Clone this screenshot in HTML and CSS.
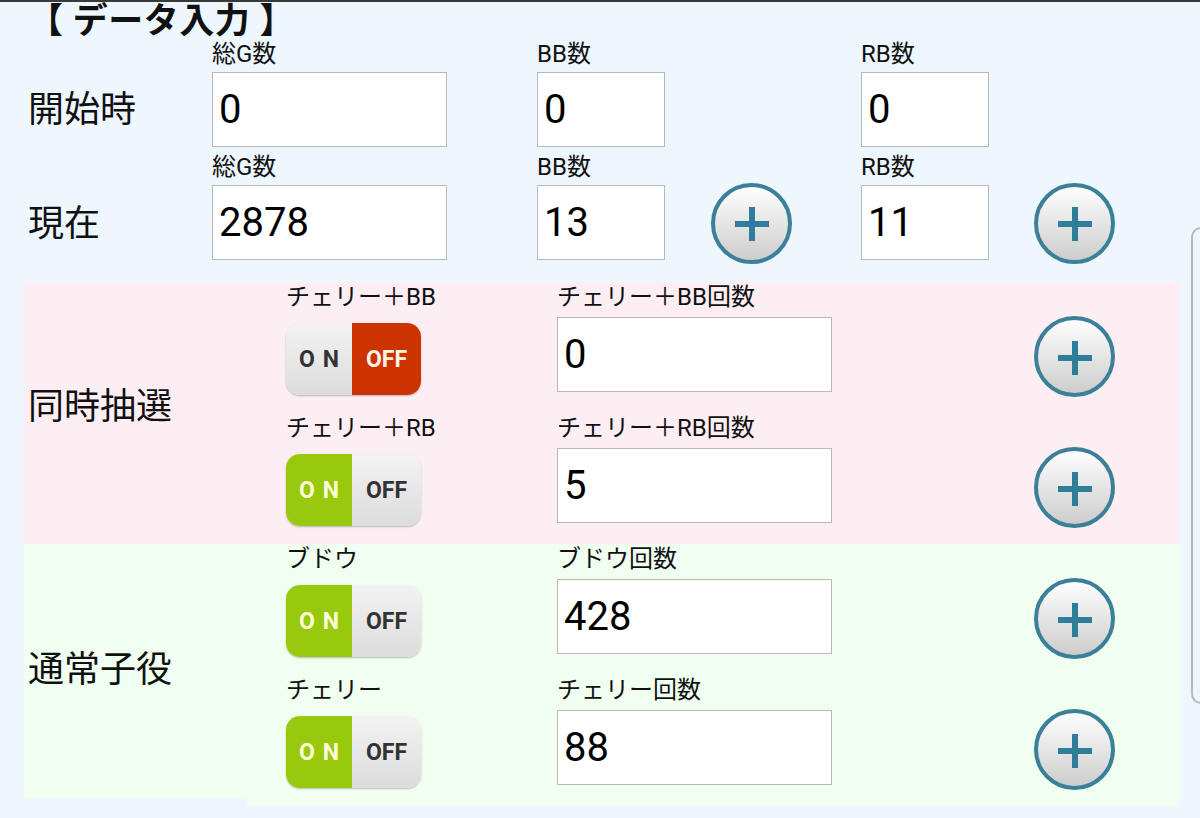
FILE: index.html
```html
<!DOCTYPE html>
<html lang="ja">
<head>
  <meta charset="UTF-8">
  <meta name="viewport" content="width=device-width, initial-scale=1.0">
  <title>データ入力</title>
  <link rel="stylesheet" href="styles.css">
</head>
<body>

<div class="topline"></div>

<div class="page">
  <h1 class="title">【 データ入力 】</h1>

  <div class="counts">
    <div></div>
    <div class="cap">総G数</div>
    <div class="cap">BB数</div>
    <div></div>
    <div class="cap">RB数</div>
    <div></div>

    <div class="row-label">開始時</div>
    <input class="num wide" type="text" value="0">
    <input class="num short" type="text" value="0">
    <div></div>
    <input class="num short" type="text" value="0">
    <div></div>

    <div></div>
    <div class="cap">総G数</div>
    <div class="cap">BB数</div>
    <div></div>
    <div class="cap">RB数</div>
    <div></div>

    <div class="row-label">現在</div>
    <input class="num wide" type="text" value="2878">
    <input class="num short" type="text" value="13">
    <button class="plus centered"><svg viewBox="0 0 34 34"><rect x="0" y="14" width="34" height="6"/><rect x="14" y="0" width="6" height="34"/></svg></button>
    <input class="num short" type="text" value="11">
    <button class="plus centered"><svg viewBox="0 0 34 34"><rect x="0" y="14" width="34" height="6"/><rect x="14" y="0" width="6" height="34"/></svg></button>
  </div>

  <div class="group pink">
    <div class="group-label">同時抽選</div>
    <div class="group-rows">
      <div class="item">
        <div class="cap">チェリー＋BB</div>
        <div class="cap">チェリー＋BB回数</div>
        <div></div>
        <div class="toggle is-off"><span class="on">O N</span><span class="off">OFF</span></div>
        <input class="num field" type="text" value="0">
        <button class="plus"><svg viewBox="0 0 34 34"><rect x="0" y="14" width="34" height="6"/><rect x="14" y="0" width="6" height="34"/></svg></button>
      </div>
      <div class="item">
        <div class="cap">チェリー＋RB</div>
        <div class="cap">チェリー＋RB回数</div>
        <div></div>
        <div class="toggle is-on"><span class="on">O N</span><span class="off">OFF</span></div>
        <input class="num field" type="text" value="5">
        <button class="plus"><svg viewBox="0 0 34 34"><rect x="0" y="14" width="34" height="6"/><rect x="14" y="0" width="6" height="34"/></svg></button>
      </div>
    </div>
  </div>

  <div class="group green">
    <div class="group-label">通常子役</div>
    <div class="group-rows">
      <div class="item">
        <div class="cap">ブドウ</div>
        <div class="cap">ブドウ回数</div>
        <div></div>
        <div class="toggle is-on"><span class="on">O N</span><span class="off">OFF</span></div>
        <input class="num field" type="text" value="428">
        <button class="plus"><svg viewBox="0 0 34 34"><rect x="0" y="14" width="34" height="6"/><rect x="14" y="0" width="6" height="34"/></svg></button>
      </div>
      <div class="item">
        <div class="cap">チェリー</div>
        <div class="cap">チェリー回数</div>
        <div></div>
        <div class="toggle is-on"><span class="on">O N</span><span class="off">OFF</span></div>
        <input class="num field" type="text" value="88">
        <button class="plus"><svg viewBox="0 0 34 34"><rect x="0" y="14" width="34" height="6"/><rect x="14" y="0" width="6" height="34"/></svg></button>
      </div>
    </div>
  </div>
</div>

<div class="side-handle"></div>

</body>
</html>
```

FILE: styles.css
```css
body {
  margin: 0;
  padding: 0;
  background-color: #eef6fe; /* light blue page */
  font-family: Roboto, "Noto Sans CJK JP", sans-serif;
  color: #111;
  overflow: hidden;
}

.topline {
  height: 2px;
  background-color: #3a3a3a;
}

.page {
  padding: 0 20px 0 24px;
}

.title {
  margin: 0;
  padding: 3px 0 0 4px;
  font-size: 35px;
  line-height: 33px;
  letter-spacing: 0.5px;
  font-weight: bold;
  color: #111;
}

.cap {
  font-size: 24px;
  line-height: 30px;
  color: #111;
  align-self: end;
  margin-bottom: 3px;
}

/* top block: start / current counts */
.counts {
  display: grid;
  grid-template-columns: 188px 325px 174px 150px 173px 81px;
  grid-template-rows: 34px 75px 38px 76px;
  margin-bottom: 21px;
}

.row-label {
  align-self: center;
  padding: 0 0 7px 4px;
  font-size: 36px;
}

.num {
  box-sizing: border-box;
  height: 75px;
  padding: 0 0 0 6px;
  border: 1px solid #b8b8b8;
  background-color: #fff;
  font-family: Roboto, sans-serif;
  font-size: 40px;
  color: #000;
  outline: none;
}

.num.wide {
  width: 235px;
}

.num.short {
  width: 128px;
}

/* plus buttons */
.plus {
  box-sizing: border-box;
  width: 81px;
  height: 81px;
  padding: 0;
  border: 4px solid #3b7f98;
  border-radius: 50%;
  background: linear-gradient(#fefefe, #cdcdcd);
  display: flex;
  align-items: center;
  justify-content: center;
}

.plus svg {
  width: 34px;
  height: 34px;
  margin-top: 2px;
  fill: #2e7e9a;
}

.plus.centered {
  align-self: center;
}

/* coloured groups */
.group {
  display: flex;
}

.group-label {
  width: 219px;
  padding-left: 4px;
  display: flex;
  align-items: center;
  font-size: 36px;
}

.pink .group-label,
.pink .group-rows {
  background-color: #fdeef3;
}

.pink .group-label {
  padding-bottom: 20px;
}

.green .group-label,
.green .group-rows {
  background-color: #f0fff0;
}

.green .group-label {
  margin-bottom: 8px;
  padding-bottom: 10px;
}

.group-rows {
  flex: 1;
}

.item {
  display: grid;
  grid-template-columns: 271px 477px 81px;
  grid-template-rows: 33px 98px;
  padding-left: 39px;
}

.item .toggle {
  margin-top: 8px;
}

.item .field {
  width: 275px;
  margin-top: 2px;
}

.item .plus {
  margin-top: 1px;
}

/* on/off switch */
.toggle {
  width: 135px;
  height: 72px;
  border-radius: 14px;
  overflow: hidden;
  display: flex;
  box-shadow: 0 1px 2px rgba(0, 0, 0, 0.25);
  font-family: Roboto, sans-serif;
  font-size: 23px;
  font-weight: bold;
}

.toggle span {
  display: flex;
  align-items: center;
  justify-content: center;
  background: linear-gradient(#f3f3f3, #dcdcdc);
  color: #333;
}

.toggle .on {
  width: 66px;
  letter-spacing: 1px;
  padding-left: 1px;
  box-sizing: border-box;
}

.toggle .off {
  width: 69px;
}

.toggle.is-on .on {
  background: #99c90c;
  color: #fdfdd8;
}

.toggle.is-off .off {
  background: #cc3300;
  color: #fff4e4;
}

.side-handle {
  position: absolute;
  left: 1191px;
  top: 227px;
  width: 24px;
  height: 473px;
  border: 2px solid #b9b9b9;
  border-radius: 10px;
}
```
